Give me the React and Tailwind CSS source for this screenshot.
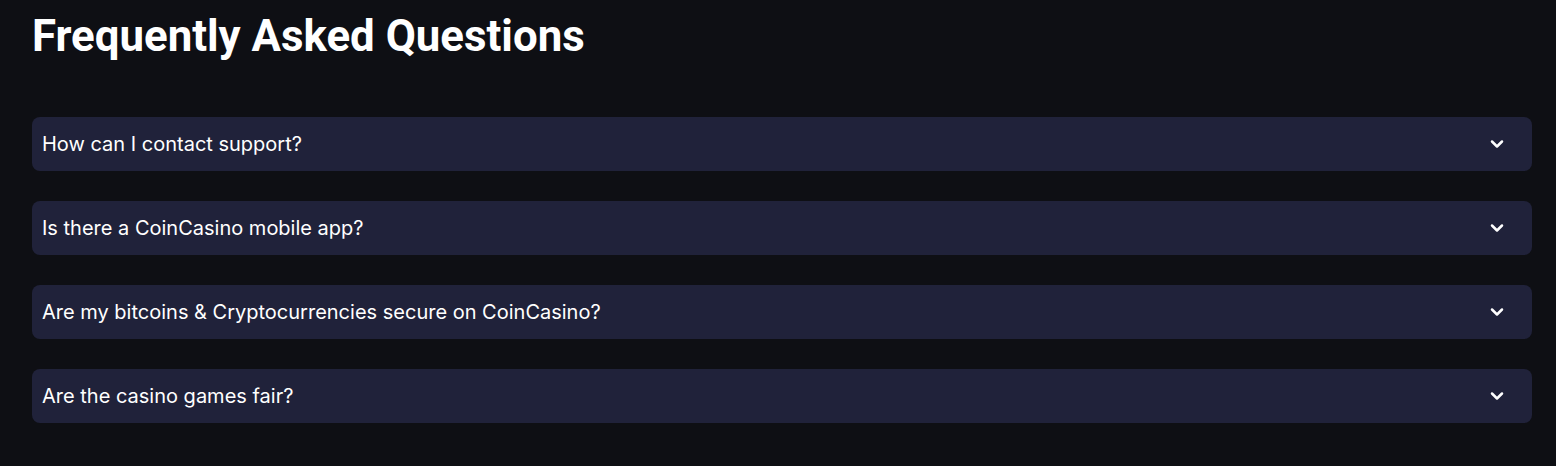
import React from 'react';
import { ChevronDown } from 'lucide-react';

const questions = [
  'How can I contact support?',
  'Is there a CoinCasino mobile app?',
  'Are my bitcoins & Cryptocurrencies secure on CoinCasino?',
  'Are the casino games fair?',
];

const App = () => {
  return (
    <div className="min-h-screen bg-[#0e0f14] pl-8 pr-6 pt-[8px]">
      <h1 className="text-[43.8px] leading-[56px] font-bold text-white font-['Roboto',sans-serif]">
        Frequently Asked Questions
      </h1>

      <div className="mt-[53px] flex flex-col gap-[30px]">
        {questions.map((q) => (
          <div
            key={q}
            className="h-[54px] bg-[#20223a] rounded-lg flex items-center justify-between pl-[10px] pr-[25px]"
          >
            <span className="text-[20px] text-white font-['Inter',sans-serif]">{q}</span>
            <ChevronDown className="w-5 h-5 text-white" strokeWidth={3} />
          </div>
        ))}
      </div>
    </div>
  );
};

export default App;
